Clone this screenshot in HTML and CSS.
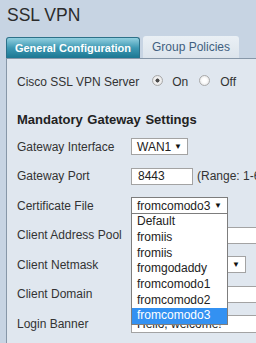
FILE: index.html
```html
<!DOCTYPE html>
<html lang="en">
<head>
    <meta charset="UTF-8">
    <meta name="viewport" content="width=device-width, initial-scale=1.0">
    <title>SSL VPN</title>
    <link rel="stylesheet" href="styles.css">
</head>
<body>
    <div class="title">SSL VPN</div>

    <div class="tabs">
        <div class="tab tab-active">General Configuration</div>
        <div class="tab tab-other">Group Policies</div>
    </div>

    <div class="panel">
        <div class="server-row">
            <span>Cisco SSL VPN Server</span>
            <span class="radio radio-on checked"></span><span class="radio-text">On</span>
            <span class="radio radio-off"></span><span class="radio-text radio-text-off">Off</span>
        </div>

        <h2 class="section">Mandatory Gateway Settings</h2>

        <div class="form">
            <span class="label">Gateway Interface</span>
            <div class="field"><span class="select select-wan">WAN1<span class="arrow">&#9660;</span></span></div>

            <span class="label">Gateway Port</span>
            <div class="field"><span class="input input-port">8443</span><span class="hint">(Range: 1-65535)</span></div>

            <span class="label">Certificate File</span>
            <div class="field">
                <div class="cert">
                    <span class="select select-cert">fromcomodo3<span class="arrow">&#9660;</span></span>
                    <!-- open dropdown list -->
                    <ul class="options">
                        <li>Default</li>
                        <li>fromiis</li>
                        <li>fromiis</li>
                        <li>fromgodaddy</li>
                        <li>fromcomodo1</li>
                        <li>fromcomodo2</li>
                        <li class="selected">fromcomodo3</li>
                    </ul>
                </div>
            </div>

            <span class="label">Client Address Pool</span>
            <div class="field"><span class="input input-wide"></span></div>

            <span class="label">Client Netmask</span>
            <div class="field"><span class="select select-mask"><span class="arrow">&#9660;</span></span></div>

            <span class="label">Client Domain</span>
            <div class="field"><span class="input input-wide"></span></div>

            <span class="label">Login Banner</span>
            <div class="field"><span class="input input-wide input-banner">Hello, welcome!</span></div>
        </div>
    </div>
</body>
</html>
```

FILE: styles.css
```css
html, body {
    margin: 0;
    overflow: hidden;
}
body {
    background-color: #c7d4e3;
    font-family: "Liberation Sans", Arial, sans-serif;
    font-size: 12px;
    color: #333;
}

.title {
    font-size: 17.5px;
    line-height: 20px;
    padding: 5px 0 0 7px;
    color: #2b2b2b;
}

/* tabs */
.tabs {
    display: flex;
    align-items: flex-end;
    gap: 3px;
    height: 22px;
    margin-top: 11px;
    padding-left: 6px;
}
.tab {
    box-sizing: border-box;
    border-radius: 3px 3px 0 0;
    text-align: center;
    white-space: nowrap;
}
.tab-active {
    width: 134px;
    height: 21px;
    line-height: 20px;
    background: linear-gradient(#92cfe0, #3d98b3 50%, #1c7792);
    border: 1px solid #2d7189;
    border-bottom: none;
    color: #fff;
    font-size: 11px;
    font-weight: bold;
}
.tab-other {
    width: 96px;
    height: 22px;
    line-height: 22px;
    background: linear-gradient(#eaf0f5, #dce4ec);
    color: #3f5f80;
}

/* panel */
.panel {
    margin-left: 6px;
    height: 271px;
    padding: 13px 0 0 10px;
    background-color: #e0e7ef;
    border-top: 1px solid #8797a8;
    border-left: 1px solid #8797a8;
}
.server-row {
    display: flex;
    height: 20px;
    line-height: 20px;
    white-space: nowrap;
}
.radio {
    box-sizing: border-box;
    width: 11px;
    height: 11px;
    margin-top: 3px;
    border: 1px solid #a9a9a9;
    border-radius: 50%;
    background: radial-gradient(#ffffff 30%, #dedede);
}
.radio.checked {
    background: radial-gradient(#4a4a4a 28%, #f4f4f4 36%, #dcdcdc);
}
.radio-on { margin-left: 13px; }
.radio-off { margin-left: 11px; }
.radio-text { margin-left: 9px; }
.radio-text-off { margin-left: 10px; }

.section {
    margin: 18px 0 0;
    font-size: 13px;
    line-height: 20px;
    color: #222;
    word-spacing: 1px;
}

/* form grid */
.form {
    display: grid;
    grid-template-columns: 114px auto;
    grid-auto-rows: 29.5px;
    align-items: center;
    margin-top: 2px;
}
.field {
    display: flex;
    align-items: center;
    white-space: nowrap;
}
.select, .input {
    display: inline-flex;
    align-items: center;
    box-sizing: border-box;
    height: 17px;
    padding: 0 5px;
    background: #fff;
    border: 1px solid #a3a3a3;
    color: #222;
}
.select {
    justify-content: space-between;
}
.arrow {
    font-size: 8px;
    color: #111;
}
.select-wan { width: 57px; }
.select-cert { width: 97px; border-color: #7d7d7d; }
.select-mask { width: 115px; justify-content: flex-end; }
.input-port { width: 62px; padding-left: 6px; }
.input-wide { width: 140px; }
.input-banner { height: 18px; }
.hint {
    margin-left: 4px;
}

/* open dropdown */
.cert {
    position: relative;
}
.options {
    position: absolute;
    top: 100%;
    left: 0;
    z-index: 2;
    box-sizing: border-box;
    width: 97px;
    margin: 0;
    padding: 0;
    list-style: none;
    background: #fff;
    border: 1px solid #7d7d7d;
    border-top: none;
}
.options li {
    height: 15.7px;
    line-height: 15.7px;
    padding-left: 5px;
    color: #222;
}
.options li.selected {
    background-color: #3391f2;
    color: #fff;
}
```
